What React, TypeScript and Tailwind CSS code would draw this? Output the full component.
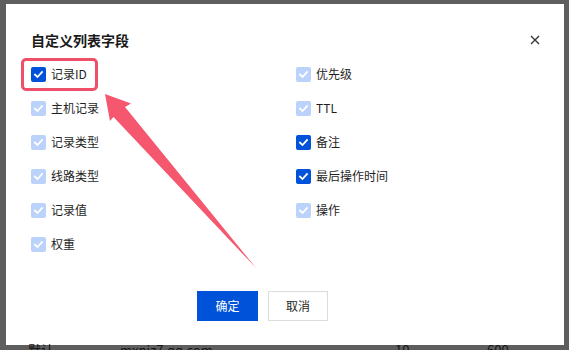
import React from "react";

type Item = { label: string; state: "on" | "disabled" };

const left: Item[] = [
  { label: "记录ID", state: "on" },
  { label: "主机记录", state: "disabled" },
  { label: "记录类型", state: "disabled" },
  { label: "线路类型", state: "disabled" },
  { label: "记录值", state: "disabled" },
  { label: "权重", state: "disabled" },
];
const right: Item[] = [
  { label: "优先级", state: "disabled" },
  { label: "TTL", state: "disabled" },
  { label: "备注", state: "on" },
  { label: "最后操作时间", state: "on" },
  { label: "操作", state: "disabled" },
];

function Box({ state }: { state: Item["state"] }) {
  return (
    <span
      className={
        "flex h-[15px] w-[15px] items-center justify-center rounded-[2px] " +
        (state === "on" ? "bg-[#0052d9]" : "bg-[#bbd3fb]")
      }
    >
      <svg width="11" height="11" viewBox="0 0 11 11">
        <polyline points="2,5.6 4.5,8 9,3" fill="none" stroke="#fff" strokeWidth="1.8" strokeLinecap="square" />
      </svg>
    </span>
  );
}

function Row({ item, first }: { item: Item; first?: boolean }) {
  return (
    <div className="relative flex h-[34px] items-center gap-[5px]">
      <Box state={item.state} />
      <span className="text-[12px] leading-[20px] text-[#1f1f1f]">{item.label}</span>
      {first && (
        <span className="pointer-events-none absolute left-[-10px] top-[1px] h-[33px] w-[77px] rounded-[5px] border-[3px] border-[#ef5069]" />
      )}
    </div>
  );
}

export default function App() {
  return (
    <div
      className="relative h-[350px] w-[569px] overflow-hidden bg-[#5e5e5e] pl-[6px] pt-[4px]"
      style={{ fontFamily: '"Noto Sans CJK SC", "Noto Sans", sans-serif' }}
    >
      <div className="flex h-[341px] w-[558px] flex-col bg-white px-[25px] pb-[24px] pt-[25px]">
        <div className="flex h-[22px] items-center justify-between">
          <span className="text-[14px] font-bold leading-[22px] text-[#1a1a1a]">自定义列表字段</span>
          <svg width="10" height="10" viewBox="0 0 10 10" className="mr-[-1px]">
            <path d="M1 1 L9 9 M9 1 L1 9" stroke="#333" strokeWidth="1.3" />
          </svg>
        </div>
        <div className="mt-[6px] grid grid-cols-[265px_1fr]">
          <div className="flex flex-col">
            {left.map((it, i) => (
              <Row key={it.label} item={it} first={i === 0} />
            ))}
          </div>
          <div className="flex flex-col">
            {right.map((it) => (
              <Row key={it.label} item={it} />
            ))}
          </div>
        </div>
        <div className="ml-[166px] mt-[30px] flex gap-[10px]">
          <button className="flex h-[30px] w-[61px] items-center justify-center bg-[#0052d9] text-[12px] text-white">
            确定
          </button>
          <button className="flex h-[30px] w-[60px] items-center justify-center border border-[#dcdcdc] bg-white text-[12px] text-[#1f1f1f]">
            取消
          </button>
        </div>
      </div>
      <div className="relative flex text-[13px] leading-[10px] text-[#151515]">
        <span className="ml-[22px] w-[92px]">默认</span>
        <span className="w-[275px]">mxpiz7.qq.com</span>
        <span className="w-[92px]">10</span>
        <span>600</span>
      </div>
      <svg
        className="pointer-events-none absolute left-0 top-0"
        width="569"
        height="350"
        viewBox="0 0 569 350"
      >
        <polygon
          points="105,94 131,103.5 125,107 256,268 113.5,117 110,121"
          fill="#f5576f"
        />
      </svg>
    </div>
  );
}
